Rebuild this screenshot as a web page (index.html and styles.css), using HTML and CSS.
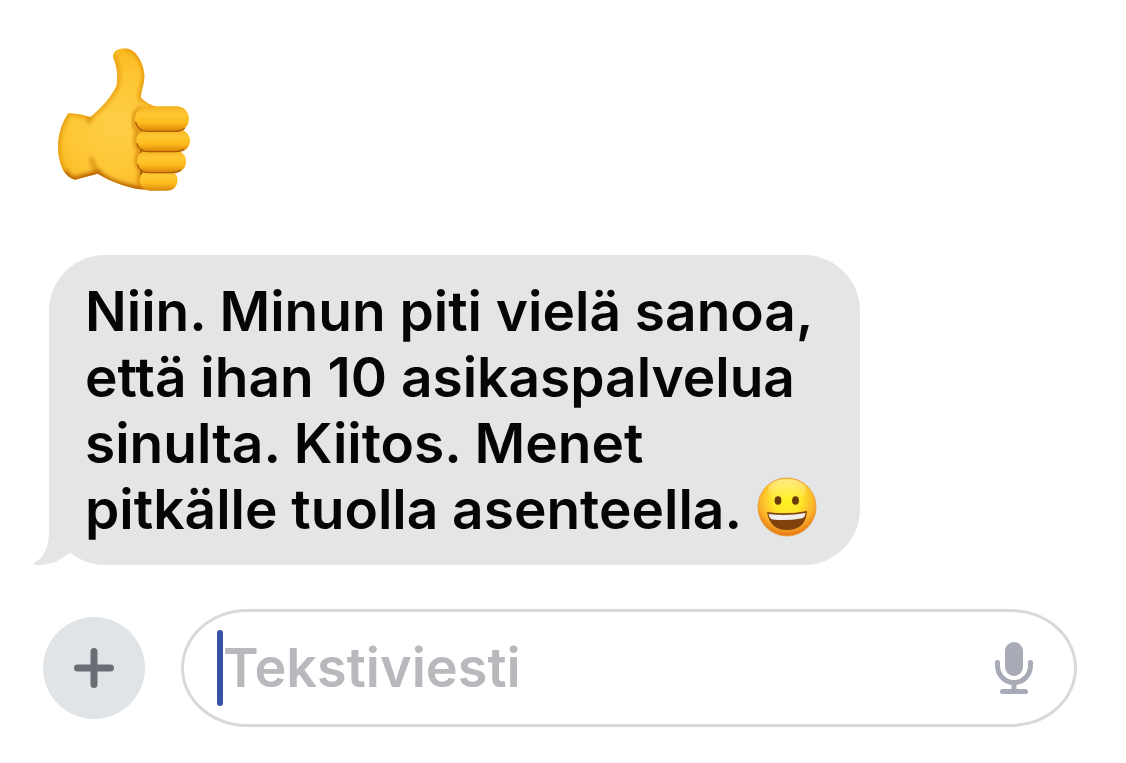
FILE: index.html
```
<!DOCTYPE html>
<html lang="fi">
<head>
    <meta charset="UTF-8">
    <meta name="viewport" content="width=device-width, initial-scale=1.0">
    <title>Viestit</title>
    <link rel="stylesheet" href="styles.css">
</head>
<body>
    <main class="chat">
        <div class="reaction">
            <svg class="thumb" viewBox="50 36 402 438" role="img" aria-label="Peukku ylös">
                <defs>
                    <radialGradient id="hand" gradientUnits="userSpaceOnUse" cx="225" cy="270" r="250">
                        <stop offset="0" stop-color="#ffce48"/>
                        <stop offset="0.6" stop-color="#fec634"/>
                        <stop offset="1" stop-color="#f9b51c"/>
                    </radialGradient>
                    <filter id="soft" x="-30%" y="-30%" width="160%" height="160%">
                        <feGaussianBlur stdDeviation="6"/>
                    </filter>
                    <linearGradient id="finger" x1="0" y1="0" x2="0" y2="1">
                        <stop offset="0" stop-color="#f3b01e"/>
                        <stop offset="0.3" stop-color="#ffc832"/>
                        <stop offset="0.65" stop-color="#fdbc1f"/>
                        <stop offset="1" stop-color="#d98508"/>
                    </linearGradient>
                    <clipPath id="hand-clip">
                        <path d="M218 66C217 48 235 40 254 40C286 41 310 82 312 120C313 150 301 169 302 188C316 203 330 209 348 215L325 464C270 464 212 440 172 416L104 434Q84 430 68 405Q51 370 53 325Q56 275 84 234Q120 236 150 246C184 221 216 181 229 151C234 120 229 92 218 66Z"/>
                    </clipPath>
                </defs>
                <g clip-path="url(#hand-clip)">
                    <rect x="50" y="36" width="300" height="440" fill="url(#hand)"/>
                    <path d="M218 60C236 100 236 125 230 152C216 184 184 223 148 248C120 236 100 234 84 232" fill="none" stroke="#e79c10" stroke-width="12" filter="url(#soft)"/>
                    <path d="M84 234Q56 275 53 325Q51 370 68 405" fill="none" stroke="#e39a10" stroke-width="14" filter="url(#soft)"/>
                    <path d="M254 37C292 43 316 88 314 124C312 150 300 170 302 190L350 215" fill="none" stroke="#e39508" stroke-width="14" filter="url(#soft)"/>
                    <path d="M68 410Q84 436 104 438L172 418C200 444 258 465 325 466" fill="none" stroke="#b55e00" stroke-width="24" filter="url(#soft)"/>
                    <path d="M152 366Q158 396 178 418M150 246Q144 256 145 264" fill="none" stroke="#c77606" stroke-width="8" filter="url(#soft)"/>
                    <path d="M306 218C270 235 278 281 296 290C278 310 288 336 300 347C282 370 290 396 304 411C292 425 298 448 308 460" fill="none" stroke="#d07a06" stroke-width="10" filter="url(#soft)"/>
                </g>
                <rect x="300" y="230" width="96" height="210" fill="#ad5b05"/>
                <rect x="298" y="404" width="114" height="63" rx="31" fill="url(#finger)"/>
                <rect x="290" y="346" width="147" height="67" rx="33" fill="url(#finger)"/>
                <rect x="288" y="284" width="161" height="66" rx="33" fill="url(#finger)"/>
                <rect x="284" y="214" width="162" height="75" rx="37" fill="url(#finger)"/>
                <g fill="none" stroke="#ad5c05" stroke-width="4" stroke-linecap="round">
                    <path d="M286 262Q292 289 325 289H400Q422 289 432 281"/>
                    <path d="M290 326Q295 350 325 350H405Q420 350 430 343"/>
                    <path d="M292 389Q298 413 325 413H395Q410 413 420 406"/>
                </g>
            </svg>
        </div>

        <div class="message">
            <svg class="tail" viewBox="0 0 48 60" aria-hidden="true">
                <path d="M16 0V24C16 42 12 52 1 58C-1 60 2 60 6 60C18 60 28 55 36 48L48 38V0Z"/>
            </svg>
            <p class="message-text">Niin. Minun piti vielä sanoa,<br>että ihan 10 asikaspalvelua<br>sinulta. Kiitos. Menet<br>pitkälle tuolla asenteella.
                <svg class="smiley" viewBox="0 0 60 60" role="img" aria-label="Hymiö">
                    <defs>
                        <radialGradient id="face" cx="0.5" cy="0.36" r="0.64">
                            <stop offset="0" stop-color="#fff51e"/>
                            <stop offset="0.4" stop-color="#ffe52a"/>
                            <stop offset="0.75" stop-color="#fbb12b"/>
                            <stop offset="1" stop-color="#e57213"/>
                        </radialGradient>
                        <linearGradient id="shine" x1="0" y1="0" x2="0" y2="1">
                            <stop offset="0" stop-color="#fff3a8" stop-opacity="0.7"/>
                            <stop offset="1" stop-color="#fff3a8" stop-opacity="0"/>
                        </linearGradient>
                    </defs>
                    <circle cx="30" cy="30" r="29" fill="url(#face)" stroke="#eda03c" stroke-width="1"/>
                    <ellipse cx="30" cy="13" rx="19" ry="11" fill="url(#shine)"/>
                    <ellipse cx="21" cy="23.5" rx="3.4" ry="4.3" fill="#6b3a09"/>
                    <ellipse cx="38.5" cy="23.5" rx="3.4" ry="4.3" fill="#6b3a09"/>
                    <path d="M10 35Q30 38 50 34Q49 53 30 53Q13 53 10 35Z" fill="#80430c"/>
                    <path d="M11.500 37Q30 39.500 48.500 36Q48 41 44 41.500Q30 44 16 42.500Q12.500 42 11.500 37Z" fill="#f1eeee"/>
                </svg>
            </p>
        </div>

        <form class="composer">
            <button class="add-button" type="button" aria-label="Lisää">
                <svg class="add-icon" viewBox="0 0 40 40" aria-hidden="true">
                    <path d="M20 3.5V36.5M3.5 20H36.5"/>
                </svg>
            </button>
            <div class="field">
                <span class="caret"></span>
                <input class="field-input" type="text" placeholder="Tekstiviesti" aria-label="Tekstiviesti">
                <button class="mic-button" type="button" aria-label="Sanele">
                    <svg class="mic-icon" viewBox="0 0 38 53" aria-hidden="true">
                        <rect x="10" y="0" width="18" height="34" rx="9" fill="#a8abb6"/>
                        <path d="M2.500 20.500V23C2.500 33 9.500 40.500 19 40.500S35.500 33 35.500 23V20.500M19 41V49M7.500 49.500H30.500" fill="none" stroke="#a8abb6" stroke-width="5" stroke-linecap="round"/>
                    </svg>
                </button>
            </div>
        </form>
    </main>
</body>
</html>
```

FILE: styles.css
```
* {
    box-sizing: border-box;
}

body {
    margin: 0;
    background-color: #fff;
    color: #050505;
    font-family: Inter, "Liberation Sans", sans-serif;
}

.chat {
    display: flex;
    flex-direction: column;
    padding: 47px 49px 36px;
}

.reaction {
    padding-left: 8px;
}

.thumb {
    display: block;
    width: 134px;
    height: 146px;
}

.message {
    position: relative;
    width: 811px;
    max-width: 100%;
    margin-top: 62px;
    padding: 23px 36px;
    border-radius: 56px;
    background-color: #e4e5e7;
}

.message-text {
    margin: 0;
    font-size: 55px;
    font-weight: 600;
    line-height: 66px;
}

.smiley {
    width: 60px;
    height: 60px;
    margin: -10px 0 -10px 2px;
    vertical-align: 2px;
}

/* little tail in the lower left corner of the bubble */
.tail {
    position: absolute;
    left: -16px;
    bottom: 0;
    width: 48px;
    height: 60px;
    fill: #e4e5e7;
}

.composer {
    display: flex;
    align-items: center;
    gap: 36px;
    margin: 44px 0 0 -6px;
}

.add-button {
    display: flex;
    align-items: center;
    justify-content: center;
    flex: none;
    width: 102px;
    height: 102px;
    padding: 0;
    border: none;
    border-radius: 50%;
    background-color: #e1e4e7;
    cursor: pointer;
}

.add-icon {
    width: 40px;
    height: 40px;
    fill: none;
    stroke: #6a6e74;
    stroke-width: 7;
    stroke-linecap: round;
}

.field {
    display: flex;
    align-items: center;
    flex: 1;
    min-width: 0;
    height: 118px;
    padding: 0 41px 0 33px;
    border: 3px solid #d9d9db;
    border-radius: 66px / 59px;
    background-color: #fff;
}

.caret {
    flex: none;
    width: 6px;
    height: 76px;
    border-radius: 3px;
    background-color: #3852a4;
}

.field-input {
    flex: 1;
    min-width: 0;
    padding: 0;
    border: none;
    outline: none;
    background: none;
    color: #050505;
    font-family: inherit;
    font-size: 54px;
    font-weight: 600;
    line-height: 66px;
}

.field-input::placeholder {
    color: #b9b9bd;
    opacity: 1;
}

.mic-button {
    flex: none;
    padding: 0;
    border: none;
    background: none;
    cursor: pointer;
}

.mic-icon {
    display: block;
    width: 38px;
    height: 53px;
}
```
